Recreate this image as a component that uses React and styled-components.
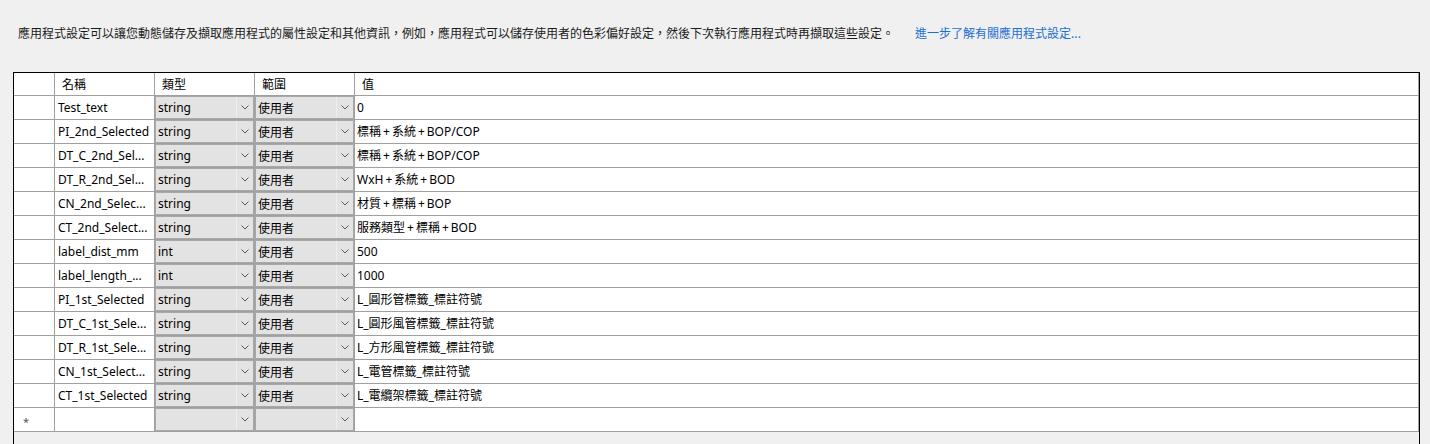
import React from "react";
import styled, { createGlobalStyle } from "styled-components";

const GlobalStyle = createGlobalStyle`
  html, body {
    margin: 0;
    padding: 0;
    background: #f0f0f0;
    overflow: hidden;
  }
  body {
    font-family: "Segoe UI", "Noto Sans", "Noto Sans CJK TC", sans-serif;
    font-size: 12px;
    color: #000;
  }
  * { box-sizing: border-box; }
`;

const Page = styled.div`
  width: 1430px;
  height: 444px;
  display: flex;
  flex-direction: column;
  overflow: hidden;
`;

const Intro = styled.div`
  display: flex;
  align-items: center;
  height: 16px;
  margin: 25px 0 0 18px;
  line-height: 16px;
  font-family: "Noto Sans CJK TC", "Segoe UI", sans-serif;
  font-size: 12px;
  white-space: nowrap;
`;

const IntroText = styled.span`
  color: #1b1b1b;
`;

const IntroLink = styled.a`
  margin-left: 21px;
  color: #1a6fd0;
  text-decoration: none;
  cursor: pointer;
`;

const Frame = styled.div`
  margin: 31px 0 0 13px;
  width: 1407px;
  flex: 1;
  border: 1px solid #000;
  border-bottom: none;
  background: #f0f0f0;
`;

const Table = styled.div`
  display: grid;
  grid-template-columns: 41px 100px 100px 100px 1fr;
`;

const Cell = styled.div`
  height: ${(p) => (p.$header ? 23 : 24)}px;
  background: #fff;
  border-right: 1px solid #a0a0a0;
  border-bottom: 1px solid #a0a0a0;
  display: flex;
  align-items: center;
  padding-left: ${(p) => p.$pad ?? 3}px;
  white-space: nowrap;
  overflow: hidden;
  font-family: "Segoe UI", "Noto Sans", "Noto Sans CJK TC", sans-serif;
  font-size: 12px;
  line-height: 16px;
  color: #000;
`;

const HeaderText = styled.span`
  font-family: "Noto Sans CJK TC", sans-serif;
  font-size: 12px;
`;

const RowGlyph = styled.span`
  font-size: 11px;
  color: #555;
  transform: translateY(2px);
`;

const Plus = styled.span`
  padding: 0 2px;
`;

const ComboCell = styled.div`
  height: 24px;
  border-right: 1px solid #a0a0a0;
  border-bottom: 1px solid #a0a0a0;
  background: #fff;
  display: flex;
`;

const Combo = styled.div`
  flex: 1;
  display: flex;
  background: #e3e3e3;
  box-shadow: inset 0 0 0 1px #a8a8a8;
`;

const ComboText = styled.div`
  flex: 1;
  display: flex;
  align-items: center;
  padding-left: 3px;
  font-family: "Segoe UI", "Noto Sans", "Noto Sans CJK TC", sans-serif;
  font-size: 12px;
  white-space: nowrap;
  overflow: hidden;
  color: #000;
`;

const ComboButton = styled.div`
  width: 17px;
  display: flex;
  align-items: center;
  justify-content: center;
  border-left: 1px solid #efefef;
  margin: 1px 1px 1px 0;
`;

const Chevron = () => (
  <svg width="8" height="5" viewBox="0 0 8 5" aria-hidden="true">
    <path d="M0.5 0.5 L4 4 L7.5 0.5" fill="none" stroke="#5a5a5a" strokeWidth="1" />
  </svg>
);

const ComboBox = ({ value }) => (
  <ComboCell>
    <Combo>
      <ComboText>{value}</ComboText>
      <ComboButton>
        <Chevron />
      </ComboButton>
    </Combo>
  </ComboCell>
);

const Value = ({ text }) => {
  const parts = text.split("+");
  return (
    <>
      {parts.map((part, i) => (
        <React.Fragment key={i}>
          {i > 0 && <Plus>+</Plus>}
          {part}
        </React.Fragment>
      ))}
    </>
  );
};

const rows = [
  ["Test_text", "string", "使用者", "0"],
  ["PI_2nd_Selected", "string", "使用者", "標稱+系統+BOP/COP"],
  ["DT_C_2nd_Sel...", "string", "使用者", "標稱+系統+BOP/COP"],
  ["DT_R_2nd_Sel...", "string", "使用者", "WxH+系統+BOD"],
  ["CN_2nd_Selec...", "string", "使用者", "材質+標稱+BOP"],
  ["CT_2nd_Select...", "string", "使用者", "服務類型+標稱+BOD"],
  ["label_dist_mm", "int", "使用者", "500"],
  ["label_length_...", "int", "使用者", "1000"],
  ["PI_1st_Selected", "string", "使用者", "L_圓形管標籤_標註符號"],
  ["DT_C_1st_Sele...", "string", "使用者", "L_圓形風管標籤_標註符號"],
  ["DT_R_1st_Sele...", "string", "使用者", "L_方形風管標籤_標註符號"],
  ["CN_1st_Select...", "string", "使用者", "L_電管標籤_標註符號"],
  ["CT_1st_Selected", "string", "使用者", "L_電纜架標籤_標註符號"],
];

export default function App() {
  return (
    <>
      <GlobalStyle />
      <Page>
        <Intro>
          <IntroText>
            應用程式設定可以讓您動態儲存及擷取應用程式的屬性設定和其他資訊，例如，應用程式可以儲存使用者的色彩偏好設定，然後下次執行應用程式時再擷取這些設定。
          </IntroText>
          <IntroLink>進一步了解有關應用程式設定...</IntroLink>
        </Intro>
        <Frame>
          <Table>
            <Cell $header />
            <Cell $header $pad={7}><HeaderText>名稱</HeaderText></Cell>
            <Cell $header $pad={7}><HeaderText>類型</HeaderText></Cell>
            <Cell $header $pad={7}><HeaderText>範圍</HeaderText></Cell>
            <Cell $header $pad={7}><HeaderText>值</HeaderText></Cell>
            {rows.map(([name, type, scope, value], i) => (
              <React.Fragment key={i}>
                <Cell />
                <Cell>{name}</Cell>
                <ComboBox value={type} />
                <ComboBox value={scope} />
                <Cell $pad={2}><Value text={value} /></Cell>
              </React.Fragment>
            ))}
            <Cell $pad={9}><RowGlyph>*</RowGlyph></Cell>
            <Cell />
            <ComboBox value="" />
            <ComboBox value="" />
            <Cell />
          </Table>
        </Frame>
      </Page>
    </>
  );
}
